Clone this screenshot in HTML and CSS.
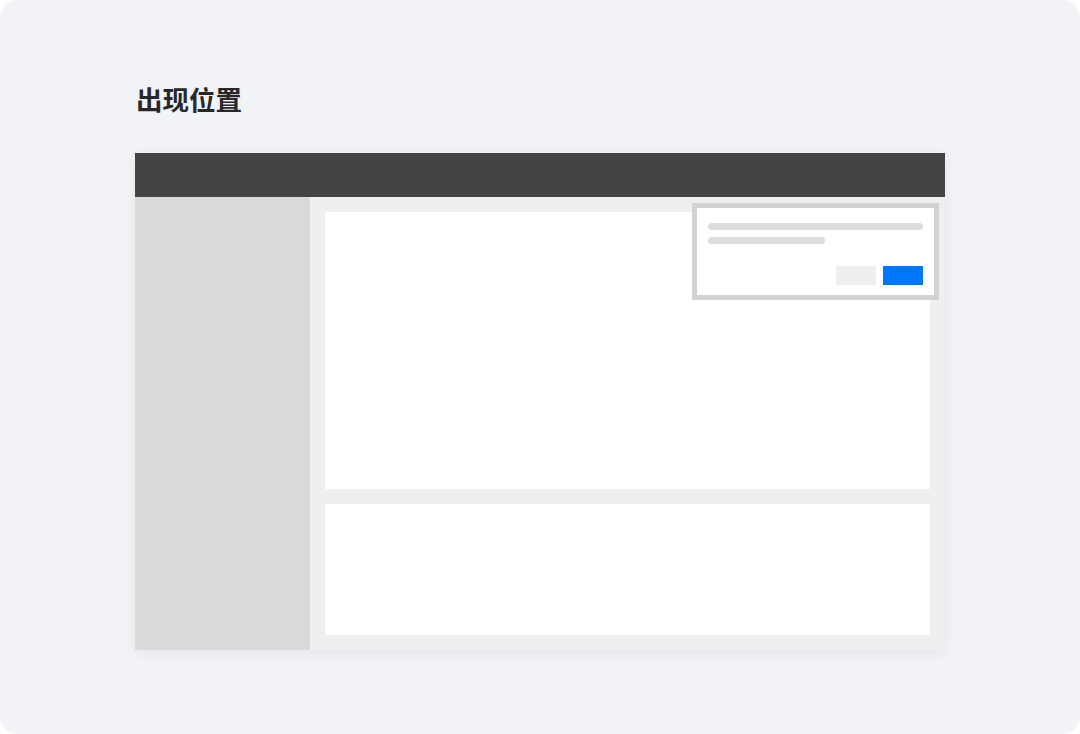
FILE: index.html
```html
<!DOCTYPE html>
<html lang="zh">
<head>
    <meta charset="UTF-8">
    <meta name="viewport" content="width=device-width, initial-scale=1.0">
    <title>出现位置</title>
    <link rel="stylesheet" href="styles.css">
</head>
<body>
    <div class="card">
        <h1 class="title">出现位置</h1>
        <div class="frame">
            <div class="frame-header"></div>
            <div class="frame-body">
                <div class="sidebar"></div>
                <div class="main">
                    <div class="panel panel-top"></div>
                    <div class="panel panel-bottom"></div>
                </div>
            </div>
            <!-- popover sitting over the top right corner of the page -->
            <div class="popover">
                <div class="line line-long"></div>
                <div class="line line-short"></div>
                <div class="actions">
                    <span class="btn btn-cancel"></span>
                    <span class="btn btn-ok"></span>
                </div>
            </div>
        </div>
    </div>
</body>
</html>
```

FILE: styles.css
```css
html, body {
    margin: 0;
    background-color: #FFFFFF;
}
body {
    font-family: "Noto Sans CJK SC", "Noto Sans", sans-serif;
}
.card {
    height: 734px;
    box-sizing: border-box;
    background-color: #F2F3F7;
    border-radius: 18px;
    padding: 79px 0 0 135px;
}
.title {
    margin: 0 0 34px 1px;
    font-size: 26.5px;
    line-height: 40px;
    font-weight: 700;
    color: #282828;
}
.frame {
    position: relative;
    width: 810px;
    height: 497px;
    display: flex;
    flex-direction: column;
    box-shadow: 0 3px 14px rgba(0,0,0,0.06);
}
.frame-header {
    height: 44px;
    background-color: #444444;
}
.frame-body {
    flex: 1;
    display: flex;
}
.sidebar {
    width: 175px;
    background-color: #D9D9D9;
}
.main {
    flex: 1;
    display: flex;
    flex-direction: column;
    gap: 15px;
    padding: 15px;
    background-color: #EFEFEF;
}
.panel {
    background-color: #FFFFFF;
}
.panel-top {
    height: 277px;
}
.panel-bottom {
    flex: 1;
}
.popover {
    position: absolute;
    left: 557px;
    top: 50px;
    width: 247px;
    height: 97px;
    box-sizing: border-box;
    padding: 15px 11px 10px;
    background-color: #FFFFFF;
    border: 5px solid #D2D2D2;
    display: flex;
    flex-direction: column;
}
.line {
    height: 7px;
    border-radius: 4px;
    background-color: #DCDCDC;
}
.line-long {
    width: 215px;
}
.line-short {
    width: 117px;
    margin-top: 7px;
}
.actions {
    margin-top: auto;
    display: flex;
    justify-content: flex-end;
    gap: 7px;
}
.btn {
    width: 40px;
    height: 19px;
}
.btn-cancel {
    background-color: #EFEFEF;
}
.btn-ok {
    background-color: #0077FF;
}
```
